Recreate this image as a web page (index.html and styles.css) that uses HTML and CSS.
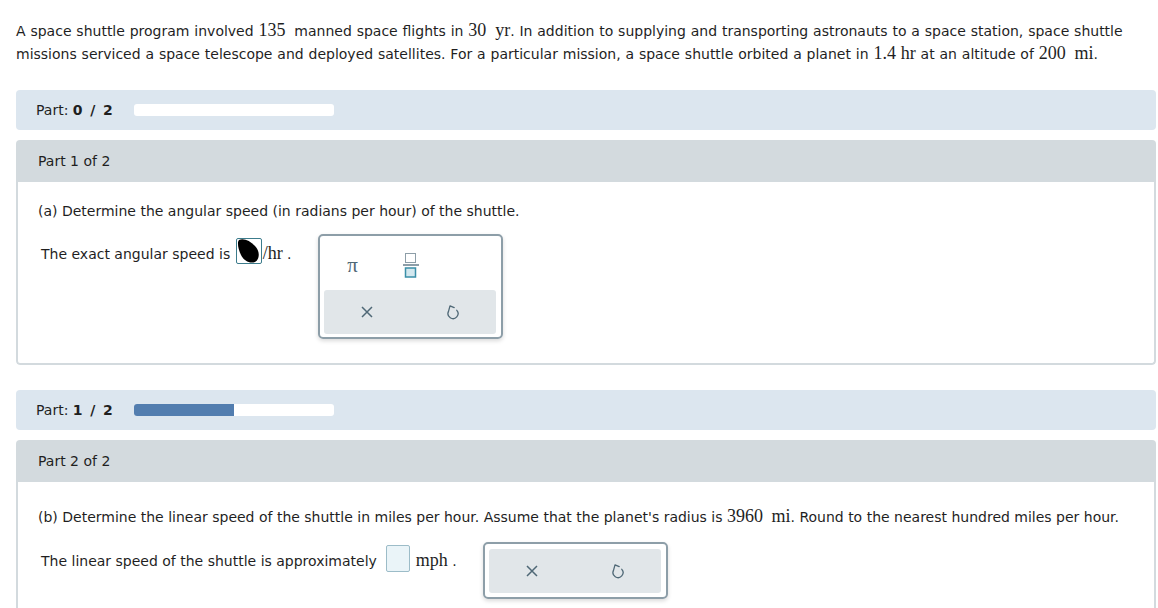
FILE: index.html
```html
<!DOCTYPE html>
<html>
<head>
<meta charset="utf-8">
<link rel="stylesheet" href="styles.css">
</head>
<body>
<div class="page">
  <p class="intro">A space shuttle program involved <span class="m num">135</span> manned space flights in <span class="m num">30</span> <span class="m">yr</span>. In addition to supplying and transporting astronauts to a space station, space shuttle missions serviced a space telescope and deployed satellites. For a particular mission, a space shuttle orbited a planet in <span class="m">1.4</span> <span class="m">hr</span> at an altitude of <span class="m num">200</span> <span class="m">mi</span>.</p>

  <div class="progress">
    <span class="plabel">Part: <b>0 / 2</b></span>
    <div class="track"><div class="fill" style="width:0%"></div></div>
  </div>

  <section class="part">
    <div class="part-head">Part 1 of 2</div>
    <div class="part-body">
      <p class="question">(a) Determine the angular speed (in radians per hour) of the shuttle.</p>
      <div class="answer-row">
        <div class="line">The exact angular speed is <span class="input filled"><svg width="25" height="26" viewBox="0 0 25 26"><path d="M3 2 C8 0 14 3 19 8 C24 13 24 21 19 24 C14 26 8 23 5 17 C2 11 1 4 3 2 Z" fill="#000"/></svg></span><span class="unit">/hr</span> .</div>
        <div class="keypad">
          <div class="keys">
            <span class="key"><span class="pi">π</span></span>
            <span class="key">
              <svg width="16" height="26" viewBox="0 0 16 26"><rect x="2.5" y="1.5" width="10" height="9" fill="#fff" stroke="#8d9ea8"/><rect x="0" y="12" width="16" height="2" fill="#8d9ea8"/><rect x="2.5" y="16" width="10" height="9" fill="#d3e8ef" stroke="#3a8fa8" stroke-width="1.5"/></svg>
            </span>
          </div>
          <div class="actions">
            <span class="act"><svg width="14" height="14" viewBox="0 0 14 14"><path d="M2 2 L12 12 M12 2 L2 12" stroke="#4f6876" stroke-width="1.5" fill="none"/></svg></span>
            <span class="act"><svg width="14" height="16" viewBox="0 0 14 16"><path d="M10.8 6.3 A5 5 0 1 1 2.5 7.4 L4 1.8 L8.2 3.6" stroke="#4f6876" stroke-width="1.3" fill="none" stroke-linejoin="round" stroke-linecap="round"/></svg></span>
          </div>
        </div>
      </div>
    </div>
  </section>

  <div class="progress">
    <span class="plabel">Part: <b>1 / 2</b></span>
    <div class="track"><div class="fill" style="width:50%"></div></div>
  </div>

  <section class="part second">
    <div class="part-head">Part 2 of 2</div>
    <div class="part-body">
      <p class="question">(b) Determine the linear speed of the shuttle in miles per hour. Assume that the planet's radius is <span class="m num">3960</span> <span class="m">mi</span>. Round to the nearest hundred miles per hour.</p>
      <div class="answer-row">
        <div class="line">The linear speed of the shuttle is approximately <span class="input empty"></span> <span class="unit">mph</span> .</div>
        <div class="keypad small">
          <div class="actions">
            <span class="act"><svg width="14" height="14" viewBox="0 0 14 14"><path d="M2 2 L12 12 M12 2 L2 12" stroke="#4f6876" stroke-width="1.5" fill="none"/></svg></span>
            <span class="act"><svg width="14" height="16" viewBox="0 0 14 16"><path d="M10.8 6.3 A5 5 0 1 1 2.5 7.4 L4 1.8 L8.2 3.6" stroke="#4f6876" stroke-width="1.3" fill="none" stroke-linejoin="round" stroke-linecap="round"/></svg></span>
          </div>
        </div>
      </div>
    </div>
  </section>
</div>
</body>
</html>
```

FILE: styles.css
```css
* { box-sizing: border-box; }
html, body { margin: 0; padding: 0; background: #fff; }
body {
  font-family: "DejaVu Sans", Verdana, sans-serif;
  font-size: 14px;
  color: #1f1f1f;
}
.page { padding: 0 2px 0 16px; overflow: hidden; height: 608px; }
.intro {
  margin: 0;
  padding-top: 20px;
  line-height: 23px;
  width: 1115px;
  word-spacing: 0.4px;
}
.m {
  font-family: "Liberation Serif", "Times New Roman", serif;
  font-size: 18px;
  line-height: 1;
}
.m.num { margin-right: 4px; }
.progress {
  margin-top: 24px;
  height: 40px;
  background: #dce6ef;
  border-radius: 4px;
  display: flex;
  align-items: center;
  padding-left: 20px;
}
.plabel { width: 98px; }
.plabel b { font-weight: bold; word-spacing: 2px; letter-spacing: 0.4px; }
.track {
  width: 200px;
  height: 12px;
  background: #fff;
  border-radius: 3px;
  overflow: hidden;
}
.fill { height: 100%; background: #527daf; }
.part {
  margin-top: 10px;
  border-radius: 4px;
  overflow: hidden;
}
.part-head {
  height: 42px;
  background: #d3dade;
  padding-left: 22px;
  display: flex;
  align-items: center;
}
.part-body {
  border: 2px solid #d3dade;
  border-top: none;
  border-radius: 0 0 4px 4px;
  padding: 19px 20px 24px 20px;
  height: 183px;
}
.part + .progress { margin-top: 25px; }
.question { margin: 0; line-height: 20px; }
.answer-row {
  display: flex;
  align-items: flex-start;
  margin-top: 13px;
  padding-left: 3px;
}
.line {
  margin-top: 6px;
  line-height: 26px;
  white-space: nowrap;
}
.input {
  display: inline-block;
  vertical-align: top;
  width: 26px;
  height: 26px;
  margin-top: -2px;
  border: 1px solid #3c7c8c;
  border-radius: 2px;
  overflow: hidden;
  margin-left: 1px;
}
.input svg { display: block; margin: -1px 0 0 -1px; }
.input.empty {
  width: 24px;
  height: 27px;
  border-color: #9cbcc8;
  background: #eaf4f8;
  margin-left: 5px;
}
.unit {
  font-family: "Liberation Serif", "Times New Roman", serif;
  font-size: 18px;
  margin-left: 1px;
}
.keypad {
  margin-left: 26px;
  width: 185px;
  border: 2px solid #8d9ea8;
  border-radius: 5px;
  padding: 0 5px 3px 4px;
  box-shadow: 0 2px 4px rgba(0, 0, 0, 0.15);
}
.keys { display: flex; height: 54px; }
.key {
  width: 58px;
  display: flex;
  align-items: center;
  justify-content: center;
  padding-top: 4px;
}
.pi {
  font-family: "Liberation Serif", "Times New Roman", serif;
  color: #4f6876;
  font-size: 21px;
}
.key svg { display: block; }
.actions {
  display: flex;
  height: 44px;
  background: #e1e6e9;
  border-radius: 3px;
}
.act {
  flex: 1;
  display: flex;
  align-items: center;
  justify-content: center;
}
.act svg { display: block; }
.keypad.small { padding: 5px 5px 4px 4px; }
.second .part-body { height: 200px; }
.second .question { padding-top: 4px; line-height: 24px; }
.second .answer-row { margin-top: 13px; }
.second .line { margin-top: 5px; }
.second .keypad { margin-left: 26px; }
```
